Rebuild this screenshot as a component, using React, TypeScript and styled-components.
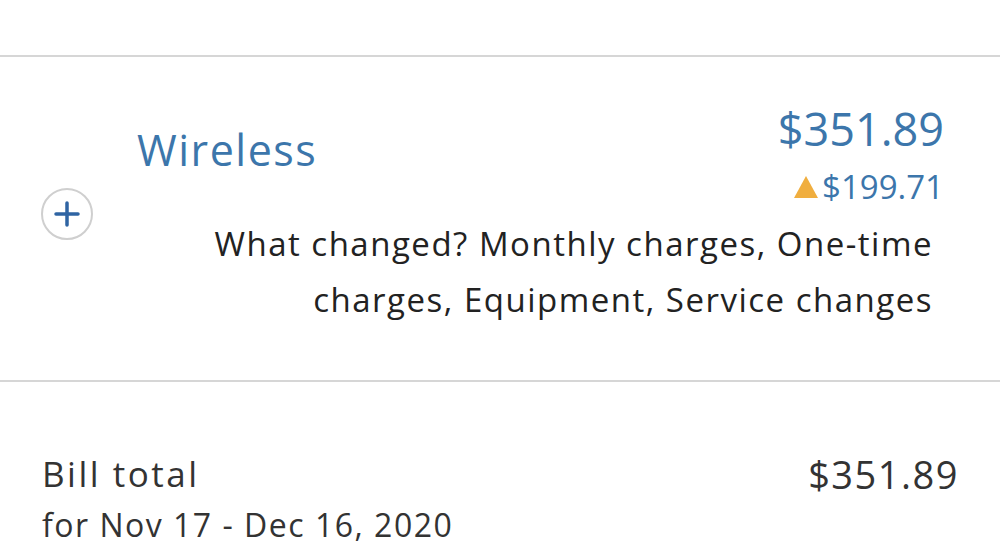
import React, { FunctionComponent } from 'react';
import styled, { createGlobalStyle } from 'styled-components';

const GlobalStyle = createGlobalStyle`
    html, body {
        margin: 0;
        padding: 0;
        background: #fff;
        font-family: 'Open Sans', Lato, sans-serif;
        color: #333;
    }
`;

const Page = styled.div`
    width: 1000px;
    height: 547px;
    overflow: hidden;
    background: #fff;
`;

const TopSpace = styled.div`
    height: 55px;
    border-bottom: 2px solid #d6d6d6;
`;

const Section = styled.div`
    display: flex;
    align-items: center;
    padding: 48px 0 52px 41px;
    border-bottom: 2px solid #d6d6d6;
`;

const ExpandButton = styled.button`
    flex: none;
    width: 52px;
    height: 52px;
    margin-top: -5px;
    border-radius: 50%;
    border: 2px solid #cfcfcf;
    background: #fff;
    padding: 0;
    display: flex;
    align-items: center;
    justify-content: center;
    cursor: pointer;
`;

const SectionBody = styled.div`
    flex: 1;
    display: flex;
    flex-direction: column;
    margin-left: 44px;
`;

const HeaderRow = styled.div`
    display: flex;
    justify-content: space-between;
    align-items: flex-start;
    padding-right: 56px;
`;

const Title = styled.div`
    margin-top: 21px;
    font-size: 43px;
    line-height: 48px;
    color: #3c76ab;
    letter-spacing: 1.5px;
`;

const Amounts = styled.div`
    display: flex;
    flex-direction: column;
    align-items: flex-end;
`;

const Amount = styled.div`
    font-size: 45px;
    line-height: 48px;
    color: #3c76ab;
`;

const Change = styled.div`
    display: flex;
    align-items: center;
    margin-top: 17px;
    font-size: 33px;
    line-height: 34px;
    color: #3c76ab;
`;

const Triangle = styled.span`
    width: 0;
    height: 0;
    border-left: 12.5px solid transparent;
    border-right: 12.5px solid transparent;
    border-bottom: 22px solid #f0ae3f;
    margin-right: 4px;
`;

const Description = styled.div`
    margin-top: 12px;
    padding-right: 67px;
    padding-left: 40px;
    text-align: right;
    font-size: 33px;
    line-height: 56px;
    letter-spacing: 1.5px;
    color: #222;
`;

const TotalSection = styled.div`
    display: flex;
    justify-content: space-between;
    align-items: flex-start;
    padding: 70px 41px 0 42px;
`;

const TotalLabel = styled.div`
    display: flex;
    flex-direction: column;
`;

const TotalTitle = styled.div`
    font-size: 35px;
    line-height: 44px;
    letter-spacing: 2.5px;
    color: #333;
`;

const TotalPeriod = styled.div`
    font-size: 32px;
    line-height: 57px;
    letter-spacing: 1.5px;
    color: #333;
`;

const TotalAmount = styled.div`
    font-size: 38px;
    line-height: 44px;
    letter-spacing: 1.5px;
    color: #333;
`;

const PlusIcon: FunctionComponent = () => (
    <svg width="28" height="28" viewBox="0 0 28 28">
        <path d="M14 3v22M3 14h22" stroke="#2f64a3" strokeWidth="3.5" strokeLinecap="round" />
    </svg>
);

const App: FunctionComponent = () => {
    return (
        <Page>
            <GlobalStyle />
            <TopSpace />
            <Section>
                <ExpandButton aria-label="Expand wireless">
                    <PlusIcon />
                </ExpandButton>
                <SectionBody>
                    <HeaderRow>
                        <Title>Wireless</Title>
                        <Amounts>
                            <Amount>$351.89</Amount>
                            <Change>
                                <Triangle />
                                $199.71
                            </Change>
                        </Amounts>
                    </HeaderRow>
                    <Description>
                        What changed? Monthly charges, One-time charges, Equipment, Service changes
                    </Description>
                </SectionBody>
            </Section>
            <TotalSection>
                <TotalLabel>
                    <TotalTitle>Bill total</TotalTitle>
                    <TotalPeriod>for Nov 17 - Dec 16, 2020</TotalPeriod>
                </TotalLabel>
                <TotalAmount>$351.89</TotalAmount>
            </TotalSection>
        </Page>
    );
};

export default App;
